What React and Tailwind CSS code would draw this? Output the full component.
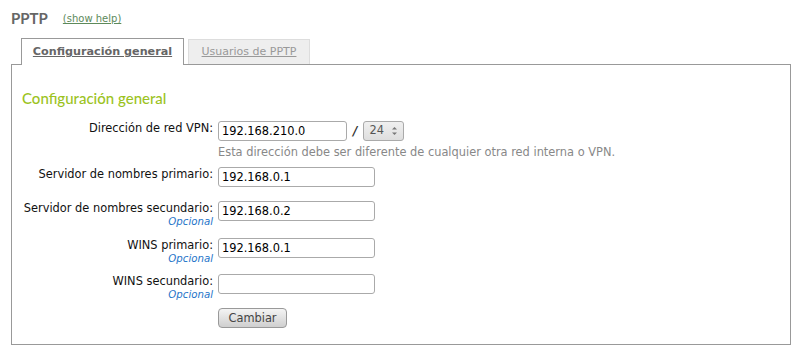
import React from "react";

const font = { fontFamily: '"DejaVu Sans", Verdana, sans-serif' };

function Label({ label, optional }) {
  return (
    <div className="w-[201px] shrink-0 text-right pt-[1px]">
      <div className="text-[11.4px] leading-[13px] text-[#111]">{label}</div>
      {optional && (
        <div className="text-[10.2px] leading-[13px] italic text-[#1f75c9]">Opcional</div>
      )}
    </div>
  );
}

function Field({ value, w = "w-[157px]" }) {
  return (
    <input
      readOnly
      value={value}
      className={`block ${w} h-[20px] border border-[#aaa] rounded-[3px] px-[3px] text-[11.4px] text-black outline-none bg-white`}
      style={font}
    />
  );
}

function Row({ label, optional, value, h, children }) {
  return (
    <div className={`flex items-start ${h}`}>
      <Label label={label} optional={optional} />
      <div className="ml-[5px]">{children || <Field value={value} />}</div>
    </div>
  );
}

export default function App() {
  return (
    <div className="w-[810px] h-[360px] bg-white overflow-hidden" style={font}>
      <div className="h-[38px] flex items-start pl-[11px] pt-[8px]">
        <span
          className="text-[15px] leading-[20px] font-bold text-[#666]"
          style={{ fontFamily: 'Lato, sans-serif' }}
        >
          PPTP
        </span>
        <span className="ml-[15px] mt-[4px] text-[10px] leading-[14px] text-[#5d8a5a] underline">
          (show help)
        </span>
      </div>
      <div className="flex items-end pl-[21px] h-[27px]">
        <div className="h-[27px] w-[163px] border border-[#999] border-b-0 bg-white relative z-10 flex items-center justify-center pt-[1px]">
          <span className="text-[11.2px] font-bold text-[#666] underline">Configuración general</span>
        </div>
        <div className="ml-[4px] mb-[1px] h-[25px] w-[122px] border border-[#ddd] border-b-0 bg-[#eee] flex items-center justify-center pt-[1px]">
          <span className="text-[11px] text-[#999] underline">Usuarios de PPTP</span>
        </div>
      </div>
      <div className="ml-[11px] w-[780px] h-[281px] border border-[#999] -mt-px">
        <div
          className="pl-[10px] pt-[23px] h-[56px] text-[15px] leading-[20px] font-medium text-[#9cc31f]"
          style={{ fontFamily: 'Lato, sans-serif' }}
        >
          Configuración general
        </div>
        <div className="flex flex-col">
          <Row label="Dirección de red VPN:" h="h-[46px]">
            <div className="flex items-center">
              <Field value="192.168.210.0" w="w-[129px]" />
              <span className="mx-[6px] text-[12px] text-[#333] italic font-bold">/</span>
              <div className="w-[41px] h-[20px] border border-[#aaa] rounded-[3px] bg-gradient-to-b from-[#f0f0f0] to-[#dedede] flex items-center justify-between pl-[5px] pr-[5px]">
                <span className="text-[11.4px] text-[#555]">24</span>
                <svg width="7" height="12" viewBox="0 0 7 12">
                  <path d="M1 4.5 L3.5 2 L6 4.5 Z" fill="#777" />
                  <path d="M1 7.5 L3.5 10 L6 7.5 Z" fill="#777" />
                </svg>
              </div>
            </div>
            <div className="mt-[4px] text-[11.4px] leading-[14px] text-[#888] whitespace-nowrap">
              Esta dirección debe ser diferente de cualquier otra red interna o VPN.
            </div>
          </Row>
          <Row label="Servidor de nombres primario:" value="192.168.0.1" h="h-[34px]" />
          <Row label="Servidor de nombres secundario:" optional value="192.168.0.2" h="h-[37px]" />
          <Row label="WINS primario:" optional value="192.168.0.1" h="h-[36px]" />
          <Row label="WINS secundario:" optional value="" h="h-[34px]" />
          <div className="ml-[206px]">
            <button
              className="block w-[69px] h-[20px] border border-[#999] rounded-[4px] bg-gradient-to-b from-[#f4f4f4] to-[#cfcfcf] text-[11.4px] leading-[18px] text-[#444]"
              style={font}
            >
              Cambiar
            </button>
          </div>
        </div>
      </div>
    </div>
  );
}
